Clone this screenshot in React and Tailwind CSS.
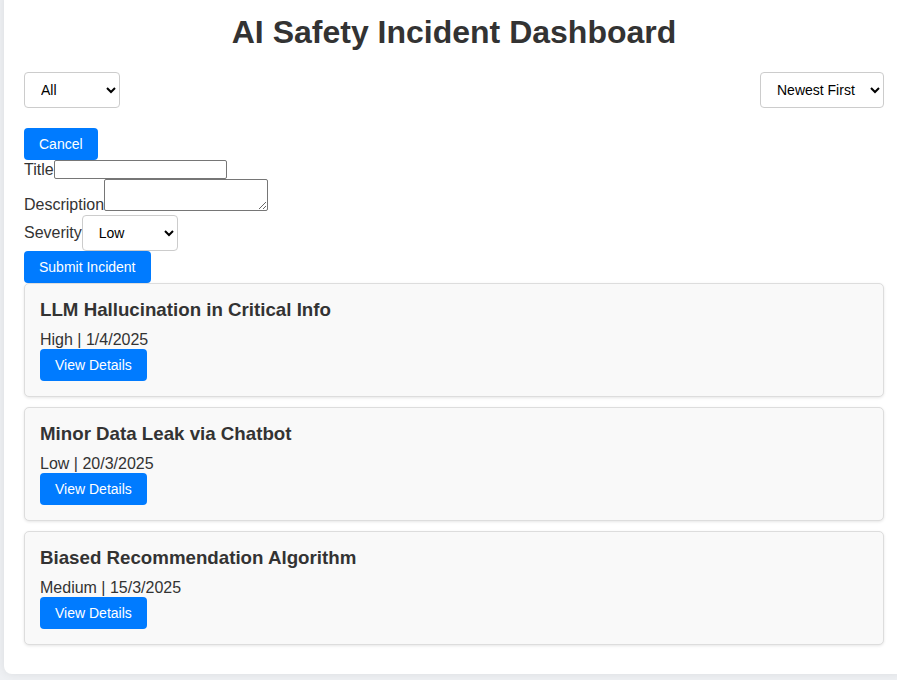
import React from "react";

const incidents = [
  { title: "LLM Hallucination in Critical Info", meta: "High | 1/4/2025" },
  { title: "Minor Data Leak via Chatbot", meta: "Low | 20/3/2025" },
  { title: "Biased Recommendation Algorithm", meta: "Medium | 15/3/2025" },
];

const selectCls =
  "h-[36px] rounded-[4px] border border-[#cccccc] bg-white pl-[12px] pr-[4px] text-[14px] text-black font-['Liberation_Sans',Arial,sans-serif]";

const btnCls =
  "rounded-[4px] bg-[#007bff] px-[15px] py-[8px] text-[14px] leading-[16px] text-white";

export default function App() {
  return (
    <div className="h-[680px] w-[897px] overflow-hidden bg-[#eef0f3] font-['Liberation_Sans',Arial,sans-serif] text-[#333333]">
      <div className="-mt-[11px] ml-[4px] w-[900px] rounded-lg bg-white px-[20px] pt-[25px] pb-[19px] shadow-[0_0_10px_rgba(0,0,0,0.08)]">
        <h1 className="mb-[21px] text-center text-[32px] font-bold leading-[37px]">
          AI Safety Incident Dashboard
        </h1>

        <div className="mb-[20px] flex items-center justify-between">
          <select className={`${selectCls} w-[96px]`} defaultValue="All">
            <option>All</option>
            <option>Low</option>
            <option>Medium</option>
            <option>High</option>
          </select>
          <select className={`${selectCls} w-[124px]`} defaultValue="Newest First">
            <option>Newest First</option>
            <option>Oldest First</option>
          </select>
        </div>

        <button className={btnCls}>Cancel</button>

        <div className="flex h-[19px] items-center text-[16px] leading-[18px]">
          <span>Title</span>
          <input
            type="text"
            className="h-[19px] w-[173px] rounded-[2px] border border-[#767676] px-[2px] text-[13px]"
          />
        </div>
        <div className="flex items-end text-[16px] leading-[18px]">
          <span className="-mb-[3px]">Description</span>
          <textarea
            rows={2}
            className="h-[32px] w-[164px] rounded-[2px] border border-[#767676] px-[2px] text-[13px]"
          />
        </div>
        <div className="mt-[4px] flex items-center text-[16px] leading-[18px]">
          <span>Severity</span>
          <select className={`${selectCls} w-[96px]`} defaultValue="Low">
            <option>Low</option>
            <option>Medium</option>
            <option>High</option>
          </select>
        </div>
        <button className={btnCls}>Submit Incident</button>

        <div className="flex flex-col">
          {incidents.map((it) => (
            <div
              key={it.title}
              className="mb-[10px] rounded-[5px] border border-[#dddddd] bg-[#f9f9f9] p-[15px] shadow-[0_1px_3px_rgba(0,0,0,0.1)]"
            >
              <h3 className="mb-[10px] text-[18.72px] font-bold leading-[22px]">
                {it.title}
              </h3>
              <p className="text-[16px] leading-[18px]">{it.meta}</p>
              <button className={btnCls}>View Details</button>
            </div>
          ))}
        </div>
      </div>
    </div>
  );
}
